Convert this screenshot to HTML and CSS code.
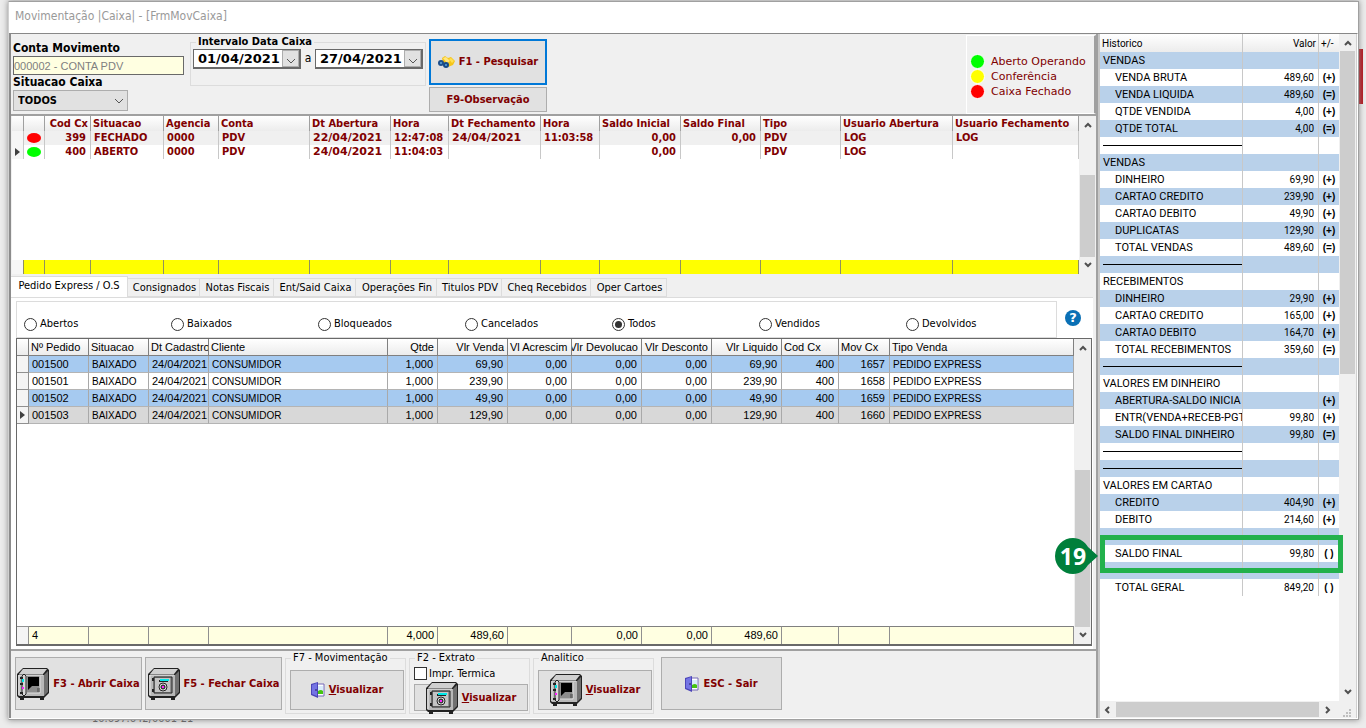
FILE: index.html
```html
<!DOCTYPE html>
<html lang="pt-BR">
<head>
  <meta charset="UTF-8">
  <title>Movimentação |Caixa| - [FrmMovCaixa]</title>
  <link rel="stylesheet" href="styles.css">
</head>
<body>
  <svg class="defs" width="0" height="0" aria-hidden="true">
    <!-- closed safe -->
    <symbol id="safe" viewBox="0 0 32 32">
      <path d="M0 6L6 0H30L32 2V25L27 30H2L0 28Z" fill="#222"/>
      <path d="M2 6L6 1H30L26 6Z" fill="#d0d0d0"/>
      <path d="M27 7L31 3V24L27 28Z" fill="#707070"/>
      <path d="M1 7H27V28H2L1 27Z" fill="#b8b8b8"/>
      <path d="M2 27V7H26" fill="none" stroke="#e8e8e8"/>
      <path d="M3 29H7V32H3ZM23 29H27V32H23Z" fill="#222"/>
      <path d="M6 9H24V25H6Z" fill="#909090" stroke="#222"/>
      <path d="M7 10H22V24H7Z" fill="#c4c4c4"/>
      <path d="M4 10H6V13H4ZM4 21H6V24H4Z" fill="#222"/>
      <path d="M11 13H20" stroke="#222" stroke-width="2"/>
      <path d="M12 12H21" stroke="#00e8e8" stroke-width="2"/>
      <circle cx="15" cy="19" r="4" fill="#e0e0e0" stroke="#222"/>
      <circle cx="15" cy="19" r="2" fill="#777" stroke="#111"/>
      <path d="M14 19H16" stroke="#ff20ff" stroke-width="2"/>
    </symbol>
    <!-- open safe -->
    <symbol id="safe-open" viewBox="0 0 32 32">
      <path d="M0 6L6 0H30L32 2V25L27 30H2L0 28Z" fill="#222"/>
      <path d="M2 6L6 1H30L26 6Z" fill="#d0d0d0"/>
      <path d="M27 7L31 3V24L27 28Z" fill="#707070"/>
      <path d="M1 7H27V28H2L1 27Z" fill="#b8b8b8"/>
      <path d="M2 27V7H26" fill="none" stroke="#e8e8e8"/>
      <path d="M3 29H7V32H3ZM23 29H27V32H23Z" fill="#222"/>
      <path d="M10 8H23V25H10Z" fill="#8c8c8c"/>
      <path d="M11 9H22V18H15L11 22Z" fill="#000"/>
      <path d="M23 8V25H10" fill="none" stroke="#ddd"/>
      <path d="M20 21H23M20 23H23" stroke="#444"/>
      <path d="M5 8L7 6L9 8V26L7 28L5 26Z" fill="#d8d8d8" stroke="#222"/>
      <path d="M3 10H6M3 16H6M3 25H6" stroke="#222" stroke-width="2"/>
      <path d="M6 11V14" stroke="#00e8e8" stroke-width="2"/>
      <path d="M6 19V21" stroke="#ff20ff" stroke-width="2"/>
    </symbol>
    <symbol id="door" viewBox="0 0 14 16">
      <path d="M5 2H13V14H5Z" fill="#fff" stroke="#7468b8"/>
      <path d="M7 4H12V9H7Z" fill="#d8ecfa"/>
      <path d="M7 9Q10 7 12 9V12H7Z" fill="#45c510"/>
      <path d="M0 2L7 0V16L0 13Z" fill="#4c45b8"/>
      <path d="M1 3L6 1V14L1 12Z" fill="#7474e4"/>
      <path d="M4 8H6" stroke="#222060"/>
    </symbol>
    <symbol id="up" viewBox="0 0 8 6">
      <path d="M1 5L4 2L7 5" fill="none" stroke="#505050" stroke-width="2"/>
    </symbol>
    <symbol id="down" viewBox="0 0 8 6">
      <path d="M1 1L4 4L7 1" fill="none" stroke="#505050" stroke-width="2"/>
    </symbol>
    <symbol id="chevron" viewBox="0 0 10 6">
      <path d="M1 1L5 5L9 1" fill="none" stroke="#555"/>
    </symbol>
    <symbol id="pointer" viewBox="0 0 5 8">
      <path d="M0 0L5 4L0 8Z" fill="#404040"/>
    </symbol>
  </svg>

  <div class="behind-accent"></div>
  <div class="behind-text">10.697.642/0001-21</div>

  <div class="window">
    <header class="titlebar">Movimentação |Caixa| - [FrmMovCaixa]</header>

    <div class="client">
      <main class="left">
        <section class="filters">
          <div class="account">
            <label for="conta">Conta Movimento</label>
            <input id="conta" type="text" value="000002 - CONTA PDV" disabled>
            <label for="situacao">Situacao Caixa</label>
            <div class="combo">
              <select id="situacao"><option>TODOS</option></select>
              <svg width="10" height="6"><use href="#chevron"/></svg>
            </div>
          </div>
          <fieldset class="group dates">
            <legend>Intervalo Data Caixa</legend>
            <div class="date">
              <input type="text" value="01/04/2021" aria-label="Data inicial">
              <button aria-label="Abrir calendario"><svg width="10" height="6"><use href="#chevron"/></svg></button>
            </div>
            <span>a</span>
            <div class="date">
              <input type="text" value="27/04/2021" aria-label="Data final">
              <button aria-label="Abrir calendario"><svg width="10" height="6"><use href="#chevron"/></svg></button>
            </div>
          </fieldset>
          <div class="search">
            <button class="btn focused">
              <svg width="17" height="12" viewBox="0 0 17 12">
                <path d="M4 2L7 0L10 2L13 1L17 5L15 9L10 11L5 7Z" fill="#f5c518"/>
                <path d="M5 2L8 1L12 5L9 7Z" fill="#ffe680"/>
                <path d="M11 3L13 2L16 5L14 7Z" fill="#ffdf50"/>
                <circle cx="3" cy="7" r="3" fill="#1d4f8c"/>
                <circle cx="8" cy="9" r="3" fill="#174a86"/>
                <circle cx="3" cy="7" r="1" fill="#5da8df"/>
                <circle cx="8" cy="9" r="1" fill="#5da8df"/>
              </svg>
              F1 - Pesquisar
            </button>
            <button class="btn">F9-Observação</button>
          </div>
          <ul class="legend">
            <li><i class="dot green"></i>Aberto Operando</li>
            <li><i class="dot yellow"></i>Conferência</li>
            <li><i class="dot red"></i>Caixa Fechado</li>
          </ul>
        </section>

        <section class="caixas">
          <div class="grid-area">
            <table class="cx">
              <colgroup>
                <col class="w12"><col class="w21"><col class="w46"><col class="w73"><col class="w55">
                <col class="w91"><col class="w81"><col class="w58"><col class="w92"><col class="w59">
                <col class="w81"><col class="w80"><col class="w80"><col class="w112"><col>
              </colgroup>
              <thead>
                <tr><th></th><th></th><th class="num">Cod Cx</th><th>Situacao</th><th>Agencia</th><th>Conta</th><th>Dt Abertura</th><th>Hora</th><th>Dt Fechamento</th><th>Hora</th><th>Saldo Inicial</th><th>Saldo Final</th><th>Tipo</th><th>Usuario Abertura</th><th>Usuario Fechamento</th></tr>
              </thead>
              <tbody>
                <tr class="alt"><td></td><td class="mark"><i class="oval red"></i></td><td class="num">399</td><td>FECHADO</td><td>0000</td><td>PDV</td><td class="wide">22/04/2021</td><td>12:47:08</td><td class="wide">24/04/2021</td><td>11:03:58</td><td class="num">0,00</td><td class="num">0,00</td><td>PDV</td><td>LOG</td><td>LOG</td></tr>
                <tr><td class="mark"><svg width="5" height="8"><use href="#pointer"/></svg></td><td class="mark"><i class="oval green"></i></td><td class="num">400</td><td>ABERTO</td><td>0000</td><td>PDV</td><td class="wide">24/04/2021</td><td>11:04:03</td><td></td><td></td><td class="num">0,00</td><td></td><td>PDV</td><td>LOG</td><td></td></tr>
              </tbody>
            </table>
            <table class="cx cx-foot">
              <colgroup>
                <col class="w12"><col class="w21"><col class="w46"><col class="w73"><col class="w55">
                <col class="w91"><col class="w81"><col class="w58"><col class="w92"><col class="w59">
                <col class="w81"><col class="w80"><col class="w80"><col class="w112"><col>
              </colgroup>
              <tbody>
                <tr><td></td><td></td><td></td><td></td><td></td><td></td><td></td><td></td><td></td><td></td><td></td><td></td><td></td><td></td><td></td></tr>
              </tbody>
            </table>
          </div>
          <div class="vscroll">
            <svg width="8" height="6"><use href="#up"/></svg>
            <div class="track"><div class="thumb thumb-cx"></div></div>
            <svg width="8" height="6"><use href="#down"/></svg>
          </div>
        </section>

        <section class="pages">
          <nav class="tabs">
            <button class="active">Pedido Express / O.S</button>
            <button class="t72">Consignados</button>
            <button class="t74">Notas Fiscais</button>
            <button class="t82">Ent/Said Caixa</button>
            <button class="t81">Operações Fin</button>
            <button class="t65">Titulos PDV</button>
            <button class="t89">Cheq Recebidos</button>
            <button class="t76">Oper Cartoes</button>
          </nav>
          <div class="page">
            <div class="status-row">
              <div class="radios">
                <label><input type="radio" name="status">Abertos</label>
                <label><input type="radio" name="status">Baixados</label>
                <label><input type="radio" name="status">Bloqueados</label>
                <label><input type="radio" name="status">Cancelados</label>
                <label><input type="radio" name="status" checked>Todos</label>
                <label><input type="radio" name="status">Vendidos</label>
                <label><input type="radio" name="status">Devolvidos</label>
              </div>
              <button class="help" aria-label="Ajuda">?</button>
            </div>

            <div class="pedidos">
              <div class="grid-area">
                <table class="pd">
                  <colgroup>
                    <col class="w12"><col class="w60"><col class="w60"><col class="w60"><col class="w179">
                    <col class="w50"><col class="w70"><col class="w64"><col class="w70"><col class="w70">
                    <col class="w70"><col class="w57"><col class="w51"><col>
                  </colgroup>
                  <thead>
                    <tr><th></th><th>Nº Pedido</th><th>Situacao</th><th>Dt Cadastro</th><th>Cliente</th><th class="num">Qtde</th><th class="num">Vlr Venda</th><th>Vl Acrescim</th><th class="num clip"><span>Vlr Devolucao</span></th><th class="num">Vlr Desconto</th><th class="num">Vlr Liquido</th><th>Cod Cx</th><th>Mov Cx</th><th>Tipo Venda</th></tr>
                  </thead>
                  <tbody>
                    <tr class="blue"><td></td><td>001500</td><td class="txt">BAIXADO</td><td>24/04/2021</td><td class="txt">CONSUMIDOR</td><td class="num">1,000</td><td class="num">69,90</td><td class="num">0,00</td><td class="num">0,00</td><td class="num">0,00</td><td class="num">69,90</td><td class="num">400</td><td class="num">1657</td><td class="txt">PEDIDO EXPRESS</td></tr>
                    <tr><td></td><td>001501</td><td class="txt">BAIXADO</td><td>24/04/2021</td><td class="txt">CONSUMIDOR</td><td class="num">1,000</td><td class="num">239,90</td><td class="num">0,00</td><td class="num">0,00</td><td class="num">0,00</td><td class="num">239,90</td><td class="num">400</td><td class="num">1658</td><td class="txt">PEDIDO EXPRESS</td></tr>
                    <tr class="blue"><td></td><td>001502</td><td class="txt">BAIXADO</td><td>24/04/2021</td><td class="txt">CONSUMIDOR</td><td class="num">1,000</td><td class="num">49,90</td><td class="num">0,00</td><td class="num">0,00</td><td class="num">0,00</td><td class="num">49,90</td><td class="num">400</td><td class="num">1659</td><td class="txt">PEDIDO EXPRESS</td></tr>
                    <tr class="current"><td class="mark"><svg width="5" height="8"><use href="#pointer"/></svg></td><td>001503</td><td class="txt">BAIXADO</td><td>24/04/2021</td><td class="txt">CONSUMIDOR</td><td class="num">1,000</td><td class="num">129,90</td><td class="num">0,00</td><td class="num">0,00</td><td class="num">0,00</td><td class="num">129,90</td><td class="num">400</td><td class="num">1660</td><td class="txt">PEDIDO EXPRESS</td></tr>
                  </tbody>
                </table>
                <table class="pd pd-foot">
                  <colgroup>
                    <col class="w12"><col class="w60"><col class="w60"><col class="w60"><col class="w179">
                    <col class="w50"><col class="w70"><col class="w64"><col class="w70"><col class="w70">
                    <col class="w70"><col class="w57"><col class="w51"><col>
                  </colgroup>
                  <tbody>
                    <tr><td></td><td>4</td><td></td><td></td><td></td><td class="num">4,000</td><td class="num">489,60</td><td></td><td class="num">0,00</td><td class="num">0,00</td><td class="num">489,60</td><td></td><td></td><td></td></tr>
                  </tbody>
                </table>
              </div>
              <div class="vscroll">
                <svg width="8" height="6"><use href="#up"/></svg>
                <div class="track"><div class="thumb thumb-pd"></div></div>
                <svg width="8" height="6"><use href="#down"/></svg>
              </div>
            </div>
          </div>
        </section>

        <footer class="actions">
          <button class="btn w127"><svg width="32" height="32"><use href="#safe-open"/></svg>F3 - Abrir Caixa</button>
          <button class="btn w137"><svg width="32" height="32"><use href="#safe"/></svg>F5 - Fechar Caixa</button>
          <fieldset class="group">
            <legend>F7 - Movimentação</legend>
            <button class="btn tall"><svg width="14" height="16"><use href="#door"/></svg><span><u>V</u>isualizar</span></button>
          </fieldset>
          <fieldset class="group">
            <legend>F2 - Extrato</legend>
            <label class="check"><input type="checkbox">Impr. Termica</label>
            <button class="btn short"><svg width="32" height="32"><use href="#safe"/></svg><span><u>V</u>isualizar</span></button>
          </fieldset>
          <fieldset class="group">
            <legend>Analitico</legend>
            <button class="btn tall"><svg width="32" height="32"><use href="#safe-open"/></svg><span><u>V</u>isualizar</span></button>
          </fieldset>
          <button class="btn w121"><svg width="14" height="16"><use href="#door"/></svg>ESC - Sair</button>
        </footer>
      </main>

      <aside class="right">
        <div class="resumo-row">
          <div class="resumo-area">
            <table class="resumo">
              <colgroup><col><col class="w76"><col class="w20"></colgroup>
              <thead>
                <tr><th>Historico</th><th class="num">Valor</th><th>+/-</th></tr>
              </thead>
              <tbody>
                <tr><td>VENDAS</td><td></td><td></td></tr>
                <tr><td class="sub">VENDA BRUTA</td><td>489,60</td><td>(+)</td></tr>
                <tr><td class="sub">VENDA LIQUIDA</td><td>489,60</td><td>(=)</td></tr>
                <tr><td class="sub">QTDE VENDIDA</td><td>4,00</td><td>(+)</td></tr>
                <tr><td class="sub">QTDE TOTAL</td><td>4,00</td><td>(=)</td></tr>
                <tr><td><hr></td><td></td><td></td></tr>
                <tr><td>VENDAS</td><td></td><td></td></tr>
                <tr><td class="sub">DINHEIRO</td><td>69,90</td><td>(+)</td></tr>
                <tr><td class="sub">CARTAO CREDITO</td><td>239,90</td><td>(+)</td></tr>
                <tr><td class="sub">CARTAO DEBITO</td><td>49,90</td><td>(+)</td></tr>
                <tr><td class="sub">DUPLICATAS</td><td>129,90</td><td>(+)</td></tr>
                <tr><td class="sub">TOTAL VENDAS</td><td>489,60</td><td>(=)</td></tr>
                <tr><td><hr></td><td></td><td></td></tr>
                <tr><td>RECEBIMENTOS</td><td></td><td></td></tr>
                <tr><td class="sub">DINHEIRO</td><td>29,90</td><td>(+)</td></tr>
                <tr><td class="sub">CARTAO CREDITO</td><td>165,00</td><td>(+)</td></tr>
                <tr><td class="sub">CARTAO DEBITO</td><td>164,70</td><td>(+)</td></tr>
                <tr><td class="sub">TOTAL RECEBIMENTOS</td><td>359,60</td><td>(=)</td></tr>
                <tr><td><hr></td><td></td><td></td></tr>
                <tr><td>VALORES EM DINHEIRO</td><td></td><td></td></tr>
                <tr><td class="sub">ABERTURA-SALDO INICIA</td><td></td><td>(+)</td></tr>
                <tr><td class="sub">ENTR(VENDA+RECEB-PGT</td><td>99,80</td><td>(+)</td></tr>
                <tr><td class="sub">SALDO FINAL DINHEIRO</td><td>99,80</td><td>(=)</td></tr>
                <tr><td><hr></td><td></td><td></td></tr>
                <tr><td><hr></td><td></td><td></td></tr>
                <tr><td>VALORES EM CARTAO</td><td></td><td></td></tr>
                <tr><td class="sub">CREDITO</td><td>404,90</td><td>(+)</td></tr>
                <tr><td class="sub">DEBITO</td><td>214,60</td><td>(+)</td></tr>
                <tr><td></td><td></td><td></td></tr>
                <tr><td class="sub">SALDO FINAL</td><td>99,80</td><td>( )</td></tr>
                <tr><td></td><td></td><td></td></tr>
                <tr><td class="sub">TOTAL GERAL</td><td>849,20</td><td>( )</td></tr>
              </tbody>
            </table>
          </div>
          <div class="vscroll">
            <svg width="8" height="6"><use href="#up"/></svg>
            <div class="track"><div class="thumb thumb-resumo"></div></div>
            <svg width="8" height="6"><use href="#down"/></svg>
          </div>
        </div>
        <div class="hscroll">
          <svg width="6" height="8" viewBox="0 0 6 8"><path d="M5 1L2 4L5 7" fill="none" stroke="#505050" stroke-width="2"/></svg>
          <div class="hthumb"></div>
          <svg width="6" height="8" viewBox="0 0 6 8"><path d="M1 1L4 4L1 7" fill="none" stroke="#505050" stroke-width="2"/></svg>
          <svg class="grip" width="9" height="9" viewBox="0 0 9 9"><path d="M6 0h2v2h-2zM3 3h2v2h-2zM6 3h2v2h-2zM0 6h2v2h-2zM3 6h2v2h-2zM6 6h2v2h-2z" fill="#bfbfbf"/></svg>
        </div>
        <div class="highlight"></div>
        <div class="step">
          <svg width="43" height="36" viewBox="0 0 43 36"><path d="M18 0C25 0 30 4 33 9L43 18L33 27C30 32 25 36 18 36A18 18 0 0 1 18 0Z" fill="#007f3b"/></svg>
          <b>19</b>
        </div>
      </aside>
    </div>
  </div>
</body>
</html>
```
FILE: styles.css
```css
* {
  box-sizing: border-box;
}
body {
  margin: 0;
  height: 100vh;
  padding: 1px 7px 8px 8px;
  overflow: hidden;
  position: relative;
  background: #ececec;
  color: #000;
  font: 11px/14px "DejaVu Sans Condensed", "DejaVu Sans", sans-serif;
}
button, input, select {
  font: inherit;
  color: inherit;
  margin: 0;
  padding: 0;
}
.defs {
  position: absolute;
}
table {
  width: 100%;
  table-layout: fixed;
  border-collapse: separate;
  border-spacing: 0;
}
th, td {
  padding: 0 3px;
  overflow: hidden;
  white-space: nowrap;
  text-align: left;
}
th.num, td.num {
  text-align: right;
}

/* what shows from the screen below the window */
.behind-accent {
  position: absolute;
  right: 3px;
  top: 49px;
  width: 5px;
  height: 55px;
  background: #b5121b;
}
.behind-text {
  position: absolute;
  left: 92px;
  bottom: 2px;
  color: #555;
}

/* window */
.window {
  position: relative;
  height: 100%;
  display: flex;
  flex-direction: column;
  background: #f0f0f0;
  border: 1px solid #a0a0a0;
  border-left-color: #d0d0d0;
  box-shadow: 0 0 6px #888;
}
.titlebar {
  height: 31px;
  padding: 7px 6px;
  background: #fff;
  color: #999;
  font-size: 12px;
}
.client {
  flex: 1;
  min-height: 0;
  display: flex;
  border-top: 1px solid #888;
  border-right: 1px solid #fff;
  border-bottom: 1px solid #fff;
}
.left {
  flex: 1;
  min-width: 0;
  display: flex;
  flex-direction: column;
  border-left: 2px solid #8c8c8c;
  border-right: 2px solid #a0a0a0;
}

/* filters */
.filters {
  height: 82px;
  display: flex;
  padding-left: 2px;
  border-bottom: 2px solid #a0a0a0;
}
.account {
  width: 171px;
  padding-top: 7px;
  display: flex;
  flex-direction: column;
  font-weight: bold;
  font-size: 12px;
}
.account label {
  line-height: 15px;
}
.account input {
  height: 19px;
  border: 1px solid #696969;
  background: #ffffe1;
  color: #808080;
  font: 11px "Liberation Sans", sans-serif;
}
.combo {
  position: relative;
  width: 115px;
}
.combo select {
  width: 100%;
  height: 21px;
  padding-left: 4px;
  appearance: none;
  border: 1px solid #adadad;
  border-radius: 0;
  background: #e1e1e1;
  font-size: 11px;
}
.combo svg {
  position: absolute;
  right: 4px;
  top: 8px;
}
.group {
  margin: 0;
  padding: 0;
  min-width: 0;
  border: 1px solid #dcdcdc;
}
.group legend {
  margin-left: 3px;
  padding: 0 2px;
}
.dates {
  width: 236px;
  height: 51px;
  margin: 1px 3px 0 6px;
  padding: 0 2px;
  display: flex;
  justify-content: space-between;
  font-size: 12px;
  line-height: 19px;
}
.dates legend {
  font-weight: bold;
  font-size: 11px;
  line-height: 14px;
}
.date {
  width: 108px;
  height: 20px;
  display: flex;
  border: 1px solid #696969;
  border-width: 1px 2px 2px 1px;
  background: #fff;
}
.date input {
  flex: 1;
  min-width: 0;
  padding-left: 4px;
  border: 0;
  font: bold 13px "DejaVu Sans", sans-serif;
}
.date button {
  width: 17px;
  border: 1px solid #adadad;
  background: #e1e1e1;
}
.btn {
  display: flex;
  align-items: center;
  justify-content: center;
  gap: 4px;
  border: 1px solid #adadad;
  background: #e1e1e1;
  color: #800000;
  font-weight: bold;
  white-space: nowrap;
}
.btn svg {
  flex: none;
}
.search {
  width: 118px;
  padding-top: 5px;
  display: flex;
  flex-direction: column;
  gap: 2px;
}
.search .btn {
  height: 25px;
}
.search .focused {
  height: 46px;
  border: 2px solid #0078d7;
}
.legend {
  width: 130px;
  margin: 1px 0 0 auto;
  padding: 18px 0 0 3px;
  list-style: none;
  border: 1px solid #fff;
  border-right: 2px solid #a0a0a0;
  color: #800000;
  font: 11px/15px "DejaVu Sans", sans-serif;
}
.legend li {
  display: flex;
  gap: 6px;
  white-space: nowrap;
}
.dot {
  width: 15px;
  height: 15px;
  border-radius: 50%;
  border: 1px solid #fff;
}
.green {
  background: #00ff00;
}
.yellow {
  background: #ffff00;
}
.red {
  background: #ff0000;
}

/* caixas grid */
.caixas {
  height: 158px;
  margin-left: 1px;
  display: flex;
  background: #fff;
}
.grid-area {
  flex: 1;
  min-width: 0;
  display: flex;
  flex-direction: column;
  justify-content: space-between;
}
.cx {
  color: #800000;
  font-weight: bold;
}
.cx th, .cx td {
  height: 14px;
  line-height: 14px;
  border-right: 1px solid #a0a0a0;
}
.cx td {
  padding: 0 4px 0 3px;
  border-right-color: #c8c8c8;
}
.cx th {
  height: 15px;
  padding: 0 2px;
  background: linear-gradient(#fff, #ececec);
}
.cx .alt td {
  background: #f0f0f0;
}
.cx td:first-child {
  background: #f6f6f6;
}
.cx td.wide {
  font-family: "DejaVu Sans", sans-serif;
}
.cx-foot td {
  background: #ff0;
  border-right-color: #909060;
}
td.mark {
  padding: 0;
  text-align: center;
}
td.mark svg, td.mark i {
  display: block;
  margin: 0 auto;
}
.oval {
  width: 14px;
  height: 10px;
  border-radius: 50%;
}
.w12 { width: 12px; }
.w20 { width: 20px; }
.w21 { width: 21px; }
.w46 { width: 46px; }
.w50 { width: 50px; }
.w51 { width: 51px; }
.w55 { width: 55px; }
.w57 { width: 57px; }
.w58 { width: 58px; }
.w59 { width: 59px; }
.w60 { width: 60px; }
.w64 { width: 64px; }
.w70 { width: 70px; }
.w73 { width: 73px; }
.w76 { width: 76px; }
.w80 { width: 80px; }
.w81 { width: 81px; }
.w91 { width: 91px; }
.w92 { width: 92px; }
.w112 { width: 112px; }
.w121 { width: 121px; }
.w127 { width: 127px; }
.w137 { width: 137px; }
.w179 { width: 179px; }

/* scrollbars */
.vscroll {
  width: 17px;
  padding: 6px 0;
  display: flex;
  flex-direction: column;
  align-items: center;
  background: #f0f0f0;
}
.vscroll svg {
  flex: none;
}
.track {
  flex: 1;
  width: 15px;
  margin: 5px 0;
  display: flex;
  flex-direction: column;
}
.thumb {
  background: #cdcdcd;
}
.thumb-cx {
  margin-top: auto;
  height: 66%;
}
.thumb-pd {
  margin-top: auto;
  height: 58%;
}
.thumb-resumo {
  height: 51%;
}

/* tabs */
.pages {
  flex: 1;
  min-height: 0;
  display: flex;
  flex-direction: column;
  padding-top: 2px;
}
.tabs {
  height: 21px;
  display: flex;
  align-items: flex-end;
}
.tabs button {
  height: 19px;
  padding-left: 2px;
  border: 1px solid #dcdcdc;
  border-left: 0;
  background: #f0f0f0;
  white-space: nowrap;
}
.tabs .active {
  width: 117px;
  height: 22px;
  margin-bottom: -1px;
  padding: 0 0 3px;
  border-bottom: 0;
  background: #fff;
}
.t65 { width: 65px; }
.t72 { width: 72px; }
.t74 { width: 74px; }
.t76 { width: 76px; }
.t81 { width: 81px; }
.t82 { width: 82px; }
.t89 { width: 89px; }
.page {
  flex: 1;
  min-height: 0;
  margin-right: 3px;
  padding: 3px 1px 3px 5px;
  display: flex;
  flex-direction: column;
  background: #fff;
  border-top: 1px solid #dcdcdc;
}
.status-row {
  height: 37px;
  display: flex;
}
.radios {
  flex: 1;
  display: grid;
  grid-template-columns: repeat(7, 147px);
  align-items: end;
  padding: 0 0 6px 7px;
  border: 1px solid #dcdcdc;
}
.radios label {
  display: flex;
  align-items: center;
  gap: 3px;
}
.radios input {
  appearance: none;
  width: 13px;
  height: 13px;
  border: 1px solid #333;
  border-radius: 50%;
  background: #fff;
}
.radios input:checked {
  background: #333;
  background-clip: content-box;
  padding: 2px;
}
.help {
  width: 16px;
  height: 16px;
  margin: 9px 11px 0 8px;
  border: 0;
  border-radius: 50%;
  background: #0a70b5;
  color: #fff;
  font: bold 13px/16px "DejaVu Sans", sans-serif;
}

/* pedidos grid */
.pedidos {
  flex: 1;
  min-height: 0;
  display: flex;
  border: 1px solid #696969;
  border-width: 1px 1px 2px 1px;
}
.pd {
  font: 11px/15px "Liberation Sans", sans-serif;
}
.pd th, .pd td {
  height: 17px;
  border-right: 1px solid #a9a9a9;
  border-bottom: 1px solid #b4b4b4;
}
.pd th {
  padding: 0 2px;
  font-weight: normal;
  border-color: #808080;
  background: linear-gradient(#fff, #ececec);
}
.pd td {
  padding: 0 4px 0 3px;
}
.pd th.num {
  padding-right: 3px;
}
.pd th.clip {
  padding-left: 0;
}
.pd .clip span {
  display: flex;
  justify-content: flex-end;
  overflow: hidden;
}
.pd .txt {
  font-size: 10px;
}
.pd .blue td {
  background: #a6caf0;
}
.pd .current td {
  background: #d8d8d8;
}
.pd tr td:first-child {
  padding: 0;
  background: #f4f4f4;
  border-color: #909090;
}
.pd-foot td {
  height: 18px;
  background: #ffffe1;
  border-top: 1px solid #808080;
  border-right-color: #909090;
  border-bottom: 0;
  padding: 0 3px;
}

/* bottom buttons */
.actions {
  height: 69px;
  display: flex;
  align-items: flex-start;
  gap: 3px;
  padding: 6px 3px 0 4px;
  border-top: 2px solid #a0a0a0;
}
.actions > .btn {
  height: 53px;
}
.actions .w121 {
  margin-left: 4px;
}
.actions .group {
  width: 121px;
  height: 63px;
  margin-top: -6px;
  padding: 0 1px 0 4px;
}
.actions .group legend {
  margin-left: 1px;
}
.group .btn {
  width: 114px;
}
.group .tall {
  height: 40px;
  margin-top: 5px;
}
.group .short {
  height: 27px;
}
.check {
  height: 13px;
  margin: 2px 0 4px;
  display: flex;
  align-items: center;
  gap: 2px;
}
.check input {
  appearance: none;
  width: 13px;
  height: 13px;
  border: 1px solid #333;
  background: #fff;
}

/* resumo */
.right {
  position: relative;
  width: 259px;
  display: flex;
  flex-direction: column;
  border-left: 2px solid #c8c8c8;
  border-right: 1px solid #d0d0d0;
  background: #fff;
}
.resumo-row {
  flex: 1;
  min-height: 0;
  display: flex;
}
.resumo-area {
  flex: 1;
  min-width: 0;
}
.resumo {
  font: 11px/17px Roboto, "Liberation Sans", sans-serif;
}
.resumo td, .resumo th {
  height: 17px;
  border-right: 1px solid #c8c8c8;
}
.resumo th {
  height: 18px;
  padding: 0 2px;
  font-size: 10px;
  font-weight: normal;
  background: linear-gradient(#fff, #ececec);
}
.resumo td:nth-child(2) {
  padding-right: 4px;
  font-size: 10px;
  text-align: right;
}
.resumo td:nth-child(3) {
  padding: 0;
  font-family: "Liberation Sans", sans-serif;
  font-size: 10px;
  font-weight: bold;
  text-align: center;
}
.resumo tr > :last-child {
  border-right: 0;
}
.resumo tbody tr:nth-child(odd) {
  background: #b9d1ea;
}
.resumo .sub {
  padding: 0 0 0 15px;
}
.resumo td:first-child {
  padding-right: 0;
}
.resumo hr {
  margin: 0;
  border: 0;
  border-top: 1px solid #000;
}
.hscroll {
  height: 17px;
  display: flex;
  align-items: center;
  padding: 0 4px;
  gap: 6px;
  background: #f0f0f0;
}
.hthumb {
  flex: 1;
  height: 15px;
  background: #cdcdcd;
}
.grip {
  margin-left: 6px;
  align-self: flex-end;
}

/* step callout */
.highlight {
  position: absolute;
  left: 0;
  top: 501px;
  width: 243px;
  height: 38px;
  border: 5px solid #22b14c;
}
.step {
  position: absolute;
  left: -45px;
  top: 504px;
  height: 36px;
}
.step b {
  position: absolute;
  left: 0;
  top: 0;
  width: 36px;
  text-align: center;
  color: #fff;
  font: bold 23px/36px "Open Sans", sans-serif;
}
```
